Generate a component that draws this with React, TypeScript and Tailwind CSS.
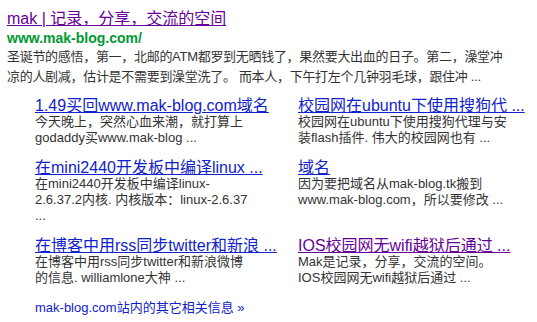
import React from 'react'

interface SiteLink {
  title: string
  lines: string[]
  visited?: boolean
}

const rows: SiteLink[][] = [
  [
    {
      title: '1.49买回www.mak-blog.com域名',
      lines: ['今天晚上，突然心血来潮，就打算上', 'godaddy买www.mak-blog ...']
    },
    {
      title: '校园网在ubuntu下使用搜狗代 ...',
      lines: ['校园网在ubuntu下使用搜狗代理与安', '装flash插件. 伟大的校园网也有 ...']
    }
  ],
  [
    {
      title: '在mini2440开发板中编译linux ...',
      lines: ['在mini2440开发板中编译linux-', '2.6.37.2内核. 内核版本：linux-2.6.37', '...']
    },
    {
      title: '域名',
      lines: ['因为要把域名从mak-blog.tk搬到', 'www.mak-blog.com，所以要修改 ...']
    }
  ],
  [
    {
      title: '在博客中用rss同步twitter和新浪 ...',
      lines: ['在博客中用rss同步twitter和新浪微博', '的信息. williamlone大神 ...']
    },
    {
      title: 'IOS校园网无wifi越狱后通过 ...',
      lines: ['Mak是记录，分享，交流的空间。', 'IOS校园网无wifi越狱后通过 ...'],
      visited: true
    }
  ]
]

function SiteLinkCell({ link }: { link: SiteLink }) {
  return (
    <div className="pb-[14px]">
      <a
        href="#"
        className={`block whitespace-nowrap text-[16px] leading-[16px] underline ${
          link.visited ? 'text-[#660099]' : 'text-[#1122cc]'
        }`}
      >
        {link.title}
      </a>
      <div className="text-[13px] leading-[16px] text-[#333333]">
        {link.lines.map((line) => (
          <div key={line} className="whitespace-nowrap">
            {line}
          </div>
        ))}
      </div>
    </div>
  )
}

export default function App() {
  return (
    <div className="min-h-[322px] w-[537px] bg-white font-['Liberation_Sans','Noto_Sans_CJK_SC',sans-serif]">
      <div className="pl-[7px] pt-[9px]">
        <a href="#" className="block whitespace-nowrap text-[16px] leading-[20px] text-[#660099] underline">
          mak | 记录，分享，交流的空间
        </a>
        <div className="text-[14px] font-bold leading-[18px] text-[#009933]">www.mak-blog.com/</div>
        <div className="text-[13px] leading-[20px] tracking-[-0.3px] text-[#333333]">
          <div className="whitespace-nowrap">
            圣诞节的感悟，第一，北邮的ATM都罗到无晒钱了，果然要大出血的日子。第二，澡堂冲
          </div>
          <div className="whitespace-nowrap">
            凉的人剧减，估计是不需要到澡堂洗了。 而本人，下午打左个几钟羽毛球，跟住冲 ...
          </div>
        </div>
      </div>

      <div className="mt-[11px] pl-[35px]">
        <div className="grid grid-cols-[263px_auto]">
          {rows.map((row, i) =>
            row.map((link, j) => <SiteLinkCell key={`${i}-${j}`} link={link} />)
          )}
        </div>
        <a href="#" className="block whitespace-nowrap text-[13px] leading-[16px] text-[#1122cc]">
          mak-blog.com站内的其它相关信息 »
        </a>
      </div>
    </div>
  )
}
